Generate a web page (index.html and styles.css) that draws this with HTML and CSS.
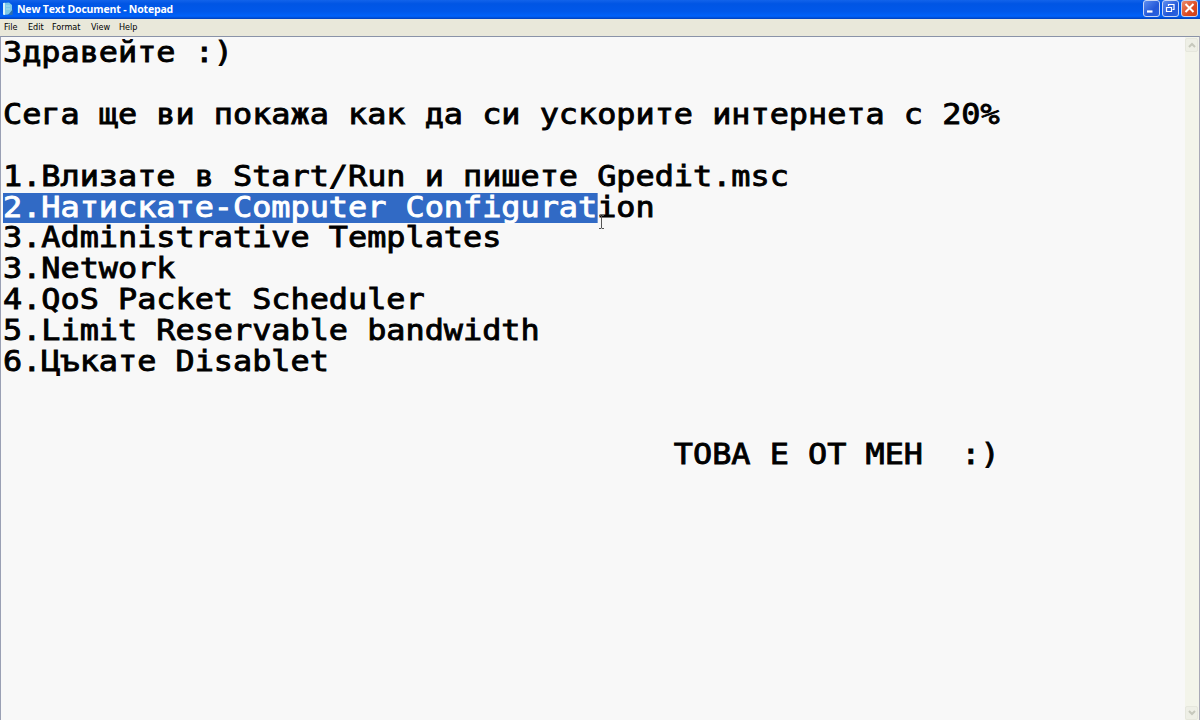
FILE: index.html
```html
<!DOCTYPE html>
<html lang="bg">
<head>
    <meta charset="UTF-8">
    <title>New Text Document - Notepad</title>
    <link rel="stylesheet" href="styles.css">
</head>
<body>
<div id="window">
    <div class="titlebar">
        <svg class="app-icon" width="12" height="14" viewBox="0 0 12 14">
            <path d="M1 1 L7 0.500 L10 3 L10 12 L2 13 L1 12 Z" fill="#7cc8e8"/>
            <path d="M1 1 L3 0.800 L3 13 L1 12.500 Z" fill="#d8f3f8"/>
            <path d="M4 4 L8 4 M4 7 L8 7" stroke="#a9e0ee"/>
            <path d="M6 13 L11 7 L10.500 13 Z" fill="#2c6fb0"/>
        </svg>
        <span class="title">New Text Document - Notepad</span>
        <div class="buttons">
            <span class="btn"><svg width="17" height="17" viewBox="0 0 17 17"><path d="M4 11.500 H9.500" stroke="#fff" stroke-width="2.200"/></svg></span>
            <span class="btn"><svg width="17" height="17" viewBox="0 0 17 17"><path d="M6.500 6 V4.500 H12 V9.500 H10.500 M4.500 7.500 H9.500 V11.500 H4.500 Z" fill="none" stroke="#fff" stroke-width="1.200"/></svg></span>
            <span class="btn close"><svg width="17" height="17" viewBox="0 0 17 17"><path d="M4.500 4 L12.500 12 M12.500 4 L4.500 12" stroke="#fff" stroke-width="2"/></svg></span>
        </div>
    </div>
    <ul class="menu">
        <li>File</li>
        <li>Edit</li>
        <li>Format</li>
        <li>View</li>
        <li>Help</li>
    </ul>
    <div class="editor">
<pre class="text">Здравейте :)

Сега ще ви покажа как да си ускорите интернета с 20%

1.Влизате в Start/Run и пишете Gpedit.msc
<span class="selected">2.Натискате-Computer Configurat</span>ion
3.Administrative Templates
3.Network
4.QoS Packet Scheduler
5.Limit Reservable bandwidth
6.Цъкате Disablet


                                   ТОВА Е ОТ МЕН  :)</pre>
        <div class="scrollbar">
            <span class="arrow"><svg width="12" height="12" viewBox="0 0 12 12"><path d="M3 8 L6 5 L9 8" fill="none" stroke="#c6c8bc" stroke-width="2"/></svg></span>
            <span class="arrow"><svg width="12" height="12" viewBox="0 0 12 12"><path d="M3 4 L6 7 L9 4" fill="none" stroke="#c6c8bc" stroke-width="2"/></svg></span>
        </div>
    </div>
    <svg class="cursor" width="7" height="14" viewBox="0 0 7 14">
        <path d="M1 .500 H3 L3.500 1 L4 .500 H6 M3.500 1 V13 M1 13.500 H3 L3.500 13 L4 13.500 H6" fill="none" stroke="#555"/>
    </svg>
</div>
</body>
</html>
```

FILE: styles.css
```css
*{
    margin: 0;
    padding: 0;
    box-sizing: border-box;
}
#window{
    position: relative;
    display: flex;
    flex-direction: column;
    width: 1200px;
    height: 720px;
    overflow: hidden;
    background: #f8f8f8;
}
.titlebar{
    display: flex;
    align-items: center;
    height: 19px;
    padding: 0 2px 2px 2px;
    background: linear-gradient(#1263ea 0, #0055e4 20%, #0058ea 60%, #0062fa 85%, #0040bc 100%);
}
.title{
    margin-left: 3px;
    font: bold 10.5px/16px "Open Sans", sans-serif;
    letter-spacing: -0.18px;
    color: #fff;
    white-space: nowrap;
}
.buttons{
    display: flex;
    gap: 2px;
    margin-left: auto;
}
.btn{
    width: 17px;
    height: 17px;
    border: 1px solid #c5d5f6;
    border-radius: 3px;
    background: linear-gradient(135deg, #5d8df0, #2358d8 60%, #2a62e0);
}
.btn svg{
    display: block;
    margin: -1px;
}
.close{
    background: linear-gradient(135deg, #ec8a6c, #dc4a22 60%, #cc4018);
}
.menu{
    display: flex;
    height: 17px;
    padding-left: 4px;
    list-style: none;
    background: #e9e8da;
    font: 9px/16px "DejaVu Sans Condensed", "DejaVu Sans", sans-serif;
    color: #000;
}
.menu li{
    width: 24px;
}
.menu li:nth-child(3){
    width: 39px;
}
.menu li:nth-child(4){
    width: 28px;
}
.editor{
    display: flex;
    flex: 1;
    justify-content: space-between;
    border-top: 1px solid #8a93a8;
    border-left: 1px solid #9aa0b4;
    border-right: 1px solid #a9a9b8;
}
.text{
    width: 1000px;
    padding: 1px 0 0 2px;
    font: 28px/30.9px "DejaVu Sans Mono", monospace;
    color: #000;
    -webkit-text-stroke: 0.85px;
    transform: scaleX(1.137);
    transform-origin: 2px 0;
}
/* inline-block keeps the fill to the height of one row */
.selected{
    display: inline-block;
    background: #316ac5;
    color: #fff;
}
.scrollbar{
    display: flex;
    flex-direction: column;
    justify-content: space-between;
    width: 14px;
    padding: 1px 1px 0 0;
    background: #f3f4ea;
}
.arrow{
    width: 13px;
    height: 14px;
    border: 1px solid #e6e7dd;
    border-radius: 2px;
    background: #eeefe6;
}
.arrow svg{
    display: block;
}
.cursor{
    position: absolute;
    left: 598px;
    top: 215px;
}
```
